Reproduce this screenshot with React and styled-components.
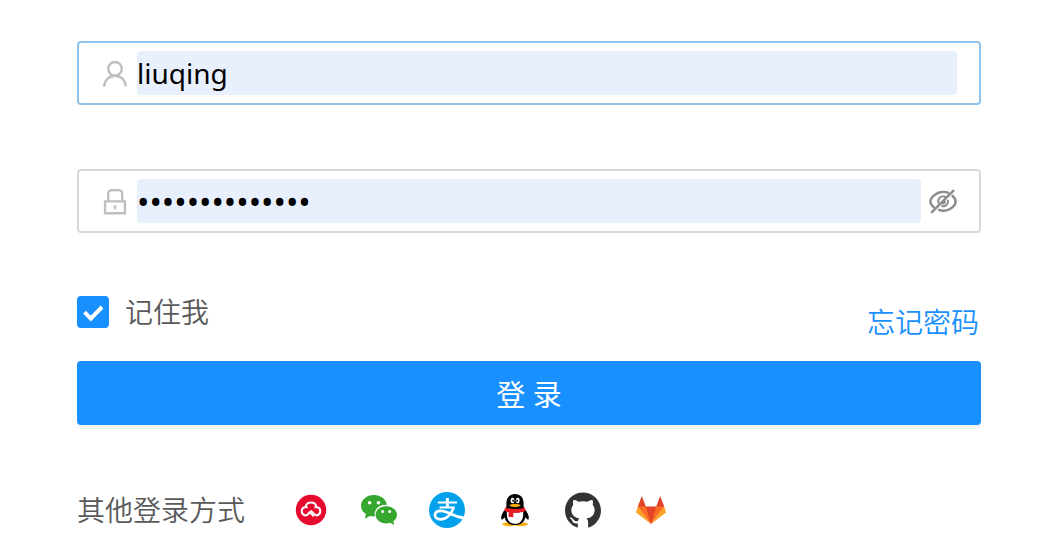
import React, { useState } from "react";
import styled, { createGlobalStyle } from "styled-components";
import { AiFillGithub } from "react-icons/ai";

const GlobalStyle = createGlobalStyle`
    * {
        box-sizing: border-box;
    }
    body {
        margin: 0;
        background: #fff;
        color: #595959;
        font-family: "Noto Sans", "Noto Sans CJK SC", sans-serif;
        font-size: 28px;
    }
`;

const Form = styled.form`
    display: flex;
    flex-direction: column;
    padding: 41px 82px 24px 77px;
`;
const Field = styled.div`
    display: flex;
    align-items: center;
    height: 64px;
    padding: 0 22px;
    border: 2px solid ${(props) => (props.$active ? "#91c3ea" : "#d9d9d9")};
    border-radius: 4px;
    margin-bottom: ${(props) => (props.$last ? "63px" : "64px")};
`;
const FieldIcon = styled.svg`
    flex: none;
    width: 28px;
    height: 28px;
    margin-right: 8px;
    fill: none;
    stroke: #bfbfbf;
    stroke-width: 2.4;
`;
const Input = styled.input`
    flex: 1;
    min-width: 0;
    height: 44px;
    padding: 0;
    border: none;
    border-radius: 4px;
    outline: none;
    background: #e8f0fe;
    color: #000;
    font-family: "Noto Sans", "Noto Sans CJK SC", sans-serif;
    font-size: ${(props) => (props.type === "password" ? "33px" : "28px")};
`;
const EyeButton = styled.button`
    display: flex;
    width: 28px;
    height: 28px;
    margin-left: 8px;
    padding: 0;
    border: none;
    background: none;
    cursor: pointer;
`;
const Options = styled.div`
    display: flex;
    justify-content: space-between;
    align-items: flex-start;
    margin-bottom: 13px;
`;
const Remember = styled.label`
    position: relative;
    display: flex;
    align-items: center;
    gap: 16px;
    line-height: 32px;
    font-weight: 350;
    cursor: pointer;
`;
const Checkbox = styled.input`
    appearance: none;
    width: 32px;
    height: 32px;
    margin: 0;
    border: 2px solid #d9d9d9;
    border-radius: 4px;
    background: #fff;
    &:checked {
        border-color: #1890ff;
        background: #1890ff;
    }
`;
const Tick = styled.svg`
    position: absolute;
    left: 0;
    top: 0;
    width: 32px;
    height: 32px;
    fill: none;
    stroke: #fff;
    stroke-width: 4;
    pointer-events: none;
`;
const Forgot = styled.a`
    padding-right: 2px;
    color: #1890ff;
    font-weight: 350;
    line-height: 52px;
    text-decoration: none;
`;
const Submit = styled.button`
    height: 64px;
    border: none;
    border-radius: 4px;
    background: #1890ff;
    box-shadow: 0 4px 0 rgba(0, 0, 0, 0.04);
    color: #fff;
    font-family: "Noto Sans", "Noto Sans CJK SC", sans-serif;
    font-size: 29px;
    cursor: pointer;
`;
const Others = styled.div`
    display: flex;
    align-items: center;
    gap: 48px;
    margin-top: 67px;
    line-height: 36px;
    font-weight: 350;
`;
const Socials = styled.div`
    display: flex;
    gap: 32px;
`;
const Social = styled.a`
    display: flex;
    color: ${(props) => props.$color};
    svg {
        width: 36px;
        height: 36px;
    }
`;

const CloudLogo = () => (
    <svg viewBox="0 0 36 36">
        <circle cx="18" cy="18" r="15.2" fill="#e60a2e" />
        <g fill="none" stroke="#fff" strokeWidth="2">
            <path d="M16.4 20.2 C15.4 22.3 14 23.4 12.2 23.4 A4.3 4.3 0 0 1 12.6 14.9 A5.5 5.3 0 0 1 23.4 14.9 A4.3 4.3 0 0 1 23.8 23.4 C21.6 23.4 20.6 20.9 17.6 18.6" />
            <path d="M12.4 14.9 L14.6 15.5 M23.6 14.9 L21.4 15.5 M16.2 19.4 L20.8 24.4" />
        </g>
    </svg>
);

const WechatLogo = () => (
    <svg viewBox="0 0 36 36">
        <path
            fill="#36a82f"
            d="M13 3 C5.8 3 0 7.8 0 13.8 C0 17.2 1.8 20.1 5 22.1 L3.9 26.8 L9 23.9 C10.4 24.3 12.3 24.5 14 24.3 A10.5 9.2 0 0 1 25.9 12.9 C25.2 7.3 19.8 3 13 3Z"
        />
        <path
            fill="#36a82f"
            d="M25.1 14.2 C19.1 14.2 14.6 18.1 14.6 22.8 C14.6 27.6 19.2 31.4 25.1 31.4 C26.5 31.4 27.8 31.2 29 30.8 L33.2 33 L32.3 29.3 C34.6 27.7 36 25.4 36 22.8 C36 18.1 31.2 14.2 25.1 14.2Z"
        />
        <g fill="#fff">
            <circle cx="8.6" cy="10.7" r="1.8" />
            <circle cx="17.5" cy="10.7" r="1.8" />
            <circle cx="21.6" cy="19.5" r="1.5" />
            <circle cx="28.7" cy="19.5" r="1.5" />
        </g>
    </svg>
);

const AlipayLogo = () => (
    <svg viewBox="0 0 36 36">
        <circle cx="18" cy="18" r="18" fill="#02a1ec" />
        <g fill="none" stroke="#fff">
            <path strokeWidth="3" d="M18.4 6 V15" />
            <path strokeWidth="2" d="M8.8 10.6 H28 M10.5 15.4 H25.4" />
            <path
                strokeWidth="2.6"
                d="M24.8 15 C22.5 22 17.5 27.4 11.6 27.4 C7.8 27.4 5.8 25.4 6 22.8 C6.2 20.5 8.4 18.9 11.6 18.9 C16 18.9 20 21 24 23"
            />
        </g>
        <path fill="#fff" d="M21.5 20.6 C26 22.6 30 23.8 35.2 24.4 L33.4 27.5 C28.5 26 24.5 24.4 20.6 22.4Z" />
    </svg>
);

const QQLogo = () => (
    <svg viewBox="0 0 36 36">
        <ellipse cx="12.2" cy="32.2" rx="7" ry="2" fill="#faab07" />
        <ellipse cx="23.8" cy="32.2" rx="7" ry="2" fill="#faab07" />
        <path
            fill="#050505"
            d="M18 2 C12.6 2 9.4 5.7 9.4 10.8 L9.4 14.5 L8 17.5 C5.6 20.4 4 23.5 4.2 26.2 C4.3 28.5 5.5 27.9 7.6 25.2 C8.7 30.2 12.3 33 18 33 C23.7 33 27.3 30.2 28.4 25.2 C30.5 27.9 31.7 28.5 31.8 26.2 C32 23.5 30.4 20.4 28 17.5 L26.6 14.5 L26.6 10.8 C26.6 5.7 23.4 2 18 2Z"
        />
        <path fill="#fff" d="M10 19 C13 21 23 21 26 19 C27 26 24.5 31.8 18 31.8 C11.5 31.8 9 26 10 19Z" />
        <ellipse cx="15.5" cy="8.5" rx="1.9" ry="2.8" fill="#fff" />
        <ellipse cx="20.7" cy="8.5" rx="1.9" ry="2.8" fill="#fff" />
        <ellipse cx="16.1" cy="8.8" rx="0.8" ry="1.2" fill="#000" />
        <ellipse cx="20.1" cy="8.8" rx="0.8" ry="1.2" fill="#000" />
        <path fill="#faab07" d="M12.2 13 C14.5 11.5 21.5 11.5 23.8 13 C22.6 15.8 13.4 15.8 12.2 13Z" />
        <path fill="#eb1c26" d="M8.4 15.4 C13 17.4 23 17.4 27.6 15.4 L28.8 18.8 C25.5 20.6 20.6 21 16.3 20.8 L16.3 25.2 L11.5 24.8 L11.8 20.4 C10 20 8.5 19.5 7.2 18.7Z" />
    </svg>
);

const GitlabLogo = () => (
    <svg viewBox="0 0 36 36">
        <path fill="#e24329" d="M8.8 4 L12.8 14.5 L23.2 14.5 L27.2 4 L31.2 14.5 L18 32 L4.8 14.5Z" />
        <path fill="#fc6d26" d="M4.8 14.5 L12.8 14.5 L18 32Z M31.2 14.5 L23.2 14.5 L18 32Z" />
        <path fill="#fca326" d="M4.8 14.5 L3 20.5 L18 32Z M31.2 14.5 L33 20.5 L18 32Z" />
    </svg>
);

const socials = [
    { name: "云账号", color: "#e60a2e", icon: <CloudLogo /> },
    { name: "微信", color: "#36a82f", icon: <WechatLogo /> },
    { name: "支付宝", color: "#02a1ec", icon: <AlipayLogo /> },
    { name: "QQ", color: "#050505", icon: <QQLogo /> },
    { name: "GitHub", color: "#333", icon: <AiFillGithub viewBox="64 64 896 896" /> },
    { name: "GitLab", color: "#fc6d26", icon: <GitlabLogo /> },
];

const App = () => {
    const [visible, setVisible] = useState(false);

    return (
        <>
            <GlobalStyle />
            <Form onSubmit={(e) => e.preventDefault()}>
                <Field $active>
                    <FieldIcon viewBox="0 -1 28 28">
                        <circle cx="14" cy="8.8" r="6.8" />
                        <path d="M3.2 26.5 C3.5 20.3 8 15.7 14 15.7 C20 15.7 24.5 20.3 24.8 26.5" />
                    </FieldIcon>
                    <Input aria-label="用户名" type="text" defaultValue="liuqing" />
                </Field>
                <Field $last>
                    <FieldIcon viewBox="0 -1 28 28">
                        <path d="M4.1 13.4 H23.9 V25.2 H4.1Z M7.2 13 V6 C7.2 3.4 8.8 2.1 11 2.1 H17.4 C19.6 2.1 21.2 3.4 21.2 6 V13" />
                        <path strokeWidth="1.8" d="M14 17.2 V21.5 M12.5 18.3 H15.5" />
                    </FieldIcon>
                    <Input
                        aria-label="密码"
                        type={visible ? "text" : "password"}
                        defaultValue="liuqing1234567"
                    />
                    <EyeButton type="button" aria-label="显示密码" onClick={() => setVisible(!visible)}>
                        <svg viewBox="0 -1 28 28" width="28" height="28" fill="none" stroke="#8c8c8c" strokeWidth="2.5">
                            <path d="M20 5.2 C16 3.4 10.3 3.6 6.3 6.6 C3.6 8.6 1.4 11.4 1.4 13.4 C1.4 15.4 3.3 18 5.6 19.8 M9.2 21.7 C14 23.5 18.8 22.8 22.2 20.3 C24.9 18.3 26.6 15.5 26.6 13.4 C26.6 11.3 25 9 22.8 7.2" />
                            <path d="M17 9.2 C14.5 7.8 11.3 8.4 9.8 10.7 C8.9 12.2 8.9 14.2 9.8 15.8 M12.4 18 C15 18.7 17.6 17.5 18.6 15.2 C19 14.2 19 12.9 18.7 11.9" strokeWidth="2" />
                            <path d="M13.2 15.2 C14.6 15.4 15.8 14.4 15.8 12.9 M2.2 24.8 L25 2.2" />
                        </svg>
                    </EyeButton>
                </Field>
                <Options>
                    <Remember>
                        <Checkbox type="checkbox" defaultChecked />
                        <Tick viewBox="0 0 32 32">
                            <path d="M7.5 16.2 L13.8 22.6 L25 11" />
                        </Tick>
                        记住我
                    </Remember>
                    <Forgot href="#forgot">忘记密码</Forgot>
                </Options>
                <Submit type="submit">登 录</Submit>
                <Others>
                    其他登录方式
                    <Socials>
                        {socials.map((item) => (
                            <Social key={item.name} href="#login" aria-label={item.name} $color={item.color}>
                                {item.icon}
                            </Social>
                        ))}
                    </Socials>
                </Others>
            </Form>
        </>
    );
};

export default App;
